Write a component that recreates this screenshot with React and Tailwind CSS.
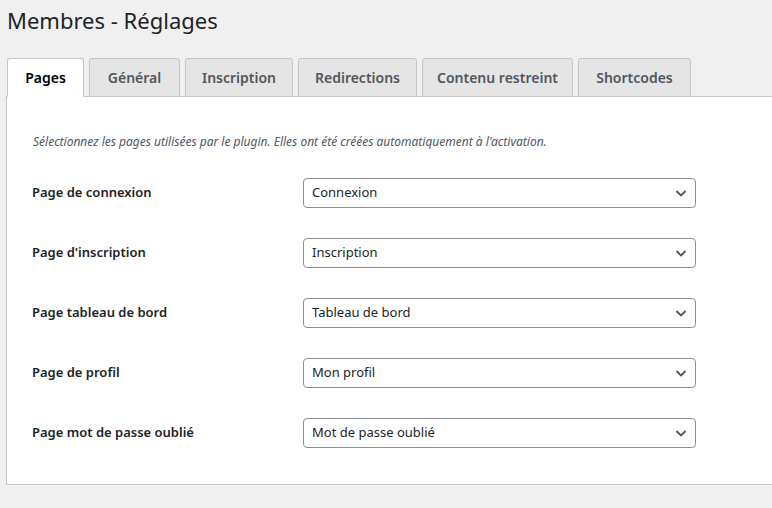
export default function App() {
  const tabs = ["Pages", "Général", "Inscription", "Redirections", "Contenu restreint", "Shortcodes"];
  const widths = ["w-[77px]", "w-[91px]", "w-[108px]", "w-[119px]", "w-[151px]", "w-[113px]"];
  const rows = [
    ["Page de connexion", "Connexion"],
    ["Page d'inscription", "Inscription"],
    ["Page tableau de bord", "Tableau de bord"],
    ["Page de profil", "Mon profil"],
    ["Page mot de passe oublié", "Mot de passe oublié"],
  ];
  return (
    <div className="w-[772px] h-[508px] overflow-hidden bg-[#f0f0f1] text-[#1d2327]" style={{ fontFamily: '"Noto Sans", "Open Sans", sans-serif' }}>
      <h1 className="pl-[7px] pt-[5px] text-[22px] leading-[30px] font-normal">Membres - Réglages</h1>
      <div className="flex gap-[5px] pl-[7px] mt-[23px] relative z-10">
        {tabs.map((t, i) => (
          <div key={t} className={`${widths[i]} h-[39px] flex items-center justify-center text-[14px] font-semibold border border-[#c3c4c7] ${i === 0 ? "bg-white border-b-white text-[#000]" : "bg-[#e5e5e5] text-[#50575e]"} rounded-t-[3px]`}>
            {t}
          </div>
        ))}
      </div>
      <div className="ml-[6px] -mt-px w-[800px] h-[389px] bg-white border border-[#c3c4c7]">
        <p className="pl-[26px] pt-[36px] text-[12px] italic text-[#50575e] leading-[18px]">
          Sélectionnez les pages utilisées par le plugin. Elles ont été créées automatiquement à l'activation.
        </p>
        <div className="flex flex-col gap-[30px] mt-[27px] pl-[25px]">
          {rows.map(([l, v]) => (
            <div key={l} className="flex items-center h-[30px]">
              <div className="w-[271px] text-[13px] font-semibold">{l}</div>
              <div className="w-[393px] h-[30px] border border-[#8c8f94] rounded-[4px] flex items-center justify-between pl-[8px] pr-[6px] text-[13px]">
                <span>{v}</span>
                <svg width="16" height="16" viewBox="0 0 16 16" fill="none" stroke="#50575e" strokeWidth="1.8">
                  <path d="M3.5 6l4.5 4.5L12.5 6" />
                </svg>
              </div>
            </div>
          ))}
        </div>
      </div>
    </div>
  );
}
